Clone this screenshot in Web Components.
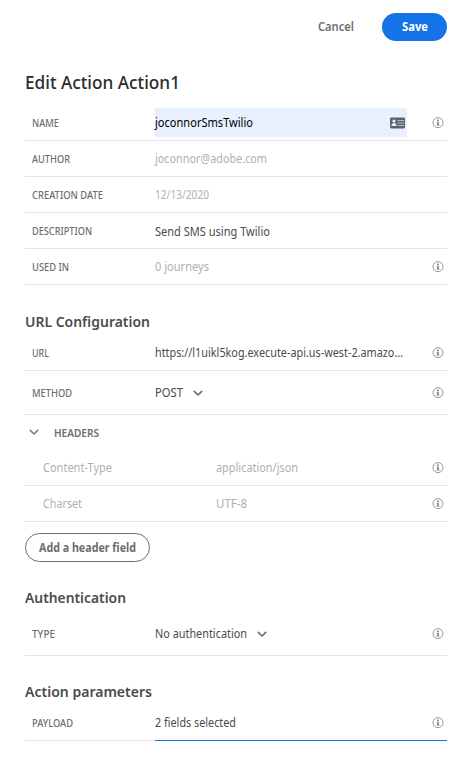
<!DOCTYPE html>
<html lang="en"><head><meta charset="utf-8"><title>Edit Action</title>
<style>
body{margin:0;background:#fff;font-family:"Noto Sans","Open Sans",sans-serif;color:#4b4b4b;font-size:12px}
</style></head><body>
<action-editor></action-editor>
<script>
const define=(name,html,setup)=>customElements.define(name,class extends HTMLElement{
  connectedCallback(){
    if(this.shadowRoot)return;
    const t=document.createElement('template');t.innerHTML=html;
    this.attachShadow({mode:'open'}).append(t.content.cloneNode(true));
    if(setup)setup(this);
  }
});

/* Text run condensed or expanded to fill the width given in its "w" attribute. */
define('fit-text','<style>:host{display:inline-block;white-space:pre;line-height:20px;vertical-align:top}span{display:inline-block;transform-origin:0 0}</style><span><slot></slot></span>',el=>{
  const w=+el.getAttribute('w'),s=el.shadowRoot.querySelector('span');
  s.style.transform=`scaleX(${w/s.getBoundingClientRect().width})`;
  el.style.width=w+'px';
});

define('info-icon',`<style>:host{display:block;width:12px;height:12px}svg{display:block}</style>
<svg width="12" height="12" viewBox="0 0 12 12"><circle cx="6" cy="5.6" r="5" fill="none" stroke="#858585" stroke-width=".85"/><path d="M5.2 2.4h1.6v1.5H5.2zM4.7 4.8h2.1v3h.6v.8H4.6v-.8h.7V5.6h-.6z" fill="#777"/></svg>`);

define('chevron-icon',`<style>:host{display:block;width:10px;height:7px}svg{display:block}</style>
<svg width="10" height="7" viewBox="0 0 10 7"><path d="M1.3 1.4 5 5l3.7-3.6" fill="none" stroke="currentColor" stroke-width="1.7" stroke-linecap="round" stroke-linejoin="round"/></svg>`);

define('card-icon',`<style>:host{display:block;width:16px;height:12px}svg{display:block}</style>
<svg width="16" height="12" viewBox="0 0 16 12"><rect x="0" y=".5" width="15" height="11" rx="1.4" fill="#5f616a"/><circle cx="4" cy="4" r="1.6" fill="#e8f0fe"/><path d="M1.5 9c0-2.2 1-3 2.5-3s2.5.8 2.5 3z" fill="#e8f0fe"/><path d="M7.5 3.5H14M7.5 6H14M7.5 8.5H14" stroke="#b8bdc8" stroke-width="1.1"/></svg>`);

define('pill-button',`<style>
:host{display:flex;box-sizing:border-box;align-items:center;justify-content:center;border-radius:15px;font-weight:700;color:#6e6e6e}
:host([kind=primary]){background:#1473e6;color:#fff;width:65px;height:28px}
:host([kind=outline]){border:1px solid #6e6e6e;width:125px;height:29px}
</style><slot></slot>`);

define('section-title',`<style>:host{display:block;font-size:15px;font-weight:600;height:20px;line-height:20px;color:#4b4b4b}</style><slot></slot>`);

define('field-row',`<style>
:host{display:grid;box-sizing:border-box;grid-template-columns:var(--label,123px) 1fr 15px;height:var(--h,36px);padding-left:var(--inset,7px);border-bottom:1px solid #e5e5e5;align-items:start}
.label{padding-top:var(--top,8px);font-size:10px;font-weight:500;color:#6e6e6e}
.value{display:flex;padding-top:var(--top,8px)}
info-icon{margin-top:calc(var(--top,8px) + 4px)}
:host(:not([info])) info-icon{display:none}
:host([readonly]) .value{color:#b0b0b0}
:host([pair]){--label:173px;--inset:18px}
:host([pair]) .label{font-size:12px;font-weight:400;color:#b0b0b0}
:host([tall]){--h:44px;--top:12px}
:host([focused]){border-bottom:0;background:linear-gradient(#1473e6,#1473e6) 130px 100%/292px 1px no-repeat,linear-gradient(#e5e5e5,#e5e5e5) 0 100%/100% 1px no-repeat}
</style><div class="label"><slot name="label"></slot></div><div class="value"><slot></slot></div><info-icon></info-icon>`);

define('filled-input',`<style>:host{display:flex;box-sizing:border-box;width:252px;height:29px;margin-top:-5px;padding:5px 1px 0 0;background:#e8f0fe;color:#000;justify-content:space-between}card-icon{margin-top:4px}</style><slot></slot><card-icon></card-icon>`);

define('action-editor',`<style>
:host{display:block;box-sizing:border-box;width:467px;height:766px;padding:13px 20px 0 25px;background:#fff}
.bar{display:flex;justify-content:flex-end;align-items:center;gap:28px;height:28px;font-weight:600;color:#6e6e6e}
h1{margin:31px 0 13px;height:20px;font-size:18.5px;line-height:20px;font-weight:500;color:#2c2c2c}
.s1{margin:26px 0 4px}.s2{margin:25px 0 5px}.s3{margin:25px 0 4px}
.drop{margin:7px 0 0 10px;color:#6e6e6e}
.group{display:flex;align-items:center;box-sizing:border-box;height:35px;padding:0 0 0 4px;gap:15px;color:#6e6e6e;font-size:10px;font-weight:600}
.group chevron-icon{color:#808080}
pill-button[kind=outline]{margin-top:11px}
</style>
<div class="bar"><fit-text w="36">Cancel</fit-text><pill-button kind="primary"><fit-text w="26">Save</fit-text></pill-button></div>
<h1><fit-text w="155">Edit Action Action1</fit-text></h1>
<field-row info><fit-text slot="label" w="27">NAME</fit-text><filled-input><fit-text w="98">joconnorSmsTwilio</fit-text></filled-input></field-row>
<field-row readonly><fit-text slot="label" w="38">AUTHOR</fit-text><fit-text w="112">joconnor@adobe.com</fit-text></field-row>
<field-row readonly><fit-text slot="label" w="71">CREATION DATE</fit-text><fit-text w="54">12/13/2020</fit-text></field-row>
<field-row style="--top:9px"><fit-text slot="label" w="60" style="margin-top:-1px">DESCRIPTION</fit-text><fit-text w="115">Send SMS using Twilio</fit-text></field-row>
<field-row info readonly><fit-text slot="label" w="37">USED IN</fit-text><fit-text w="54">0 journeys</fit-text></field-row>
<section-title class="s1"><fit-text w="125">URL Configuration</fit-text></section-title>
<field-row info><fit-text slot="label" w="17">URL</fit-text><fit-text w="248">https://l1uikl5kog.execute-api.us-west-2.amazo…</fit-text></field-row>
<field-row info tall><fit-text slot="label" w="40">METHOD</fit-text><fit-text w="28">POST</fit-text><chevron-icon class="drop"></chevron-icon></field-row>
<div class="group"><chevron-icon></chevron-icon><fit-text w="45">HEADERS</fit-text></div>
<field-row pair readonly info><fit-text slot="label" w="69">Content-Type</fit-text><fit-text w="82">application/json</fit-text></field-row>
<field-row pair readonly info><fit-text slot="label" w="39">Charset</fit-text><fit-text w="31">UTF-8</fit-text></field-row>
<pill-button kind="outline"><fit-text w="97">Add a header field</fit-text></pill-button>
<section-title class="s2"><fit-text w="101">Authentication</fit-text></section-title>
<field-row info tall><fit-text slot="label" w="23">TYPE</fit-text><fit-text w="92">No authentication</fit-text><chevron-icon class="drop"></chevron-icon></field-row>
<section-title class="s3"><fit-text w="127">Action parameters</fit-text></section-title>
<field-row info focused><fit-text slot="label" w="41">PAYLOAD</fit-text><fit-text w="81">2 fields selected</fit-text></field-row>`);
</script></body></html>
